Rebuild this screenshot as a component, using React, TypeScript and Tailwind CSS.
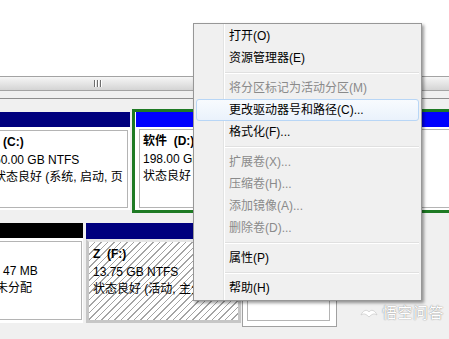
import React from "react";

const FONT = '"Liberation Sans", "Noto Sans CJK SC", sans-serif';

type Item = { label: string; disabled?: boolean; active?: boolean } | "sep";

const items: Item[] = [
  { label: "打开(O)" },
  { label: "资源管理器(E)" },
  "sep",
  { label: "将分区标记为活动分区(M)", disabled: true },
  { label: "更改驱动器号和路径(C)...", active: true },
  { label: "格式化(F)..." },
  "sep",
  { label: "扩展卷(X)...", disabled: true },
  { label: "压缩卷(H)...", disabled: true },
  { label: "添加镜像(A)...", disabled: true },
  { label: "删除卷(D)...", disabled: true },
  "sep",
  { label: "属性(P)" },
  "sep",
  { label: "帮助(H)" },
];

function Menu() {
  return (
    <div className="absolute left-[193px] top-[23px] w-[229px] h-[278px] border border-[#979797] bg-[#f0f0f0] shadow-[2px_2px_3px_rgba(0,0,0,0.4)] py-[1px]">
      <div className="absolute left-[29px] top-0 bottom-0 w-[2px] border-l border-[#e2e3e3] bg-white" />
      <div className="relative flex flex-col">
        {items.map((it, i) =>
          it === "sep" ? (
            <div key={i} className="h-[8px] flex flex-col justify-center pl-[31px] pr-[2px]">
              <div className="h-[1px] bg-[#e0e0e0]" />
              <div className="h-[1px] bg-white" />
            </div>
          ) : (
            <div
              key={i}
              className={
                "h-[22px] flex items-center text-[12px] leading-[22px] whitespace-nowrap " +
                (it.active
                  ? "mx-[2px] pl-[32px] rounded-[3px] border border-[#b8d6f6] bg-gradient-to-b from-[#f8fbfe] to-[#eaf2fc]"
                  : "pl-[35px]") +
                (it.disabled ? " text-[#8a8a8a]" : " text-black")
              }
            >
              {it.label}
            </div>
          )
        )}
      </div>
    </div>
  );
}

function Lines({ lines, pl, firstPl = 0, secondPl = 0 }: { lines: [string, string, string]; pl: number; firstPl?: number; secondPl?: number }) {
  return (
    <div className="text-[12px] leading-[17.5px] text-black whitespace-pre overflow-hidden pt-[3px]" style={{ paddingLeft: pl }}>
      <div className="font-bold h-[17.5px]" style={{ paddingLeft: firstPl }}>{lines[0]}</div>
      <div className="h-[17.5px]" style={{ paddingLeft: secondPl }}>{lines[1]}</div>
      <div className="h-[17.5px]">{lines[2]}</div>
    </div>
  );
}

function Watermark() {
  return (
    <div className="absolute left-[360px] top-[304px] flex items-center gap-[4px]">
      <svg width="18" height="14" viewBox="0 0 18 14">
        <path d="M1 9 C3 4 7 3 9 6 C11 3 15 4 17 9 C14 7 12 8 9 11 C6 8 4 7 1 9 Z" fill="#ffffff" stroke="#c8c8c8" strokeWidth="0.7" />
      </svg>
      <span className="text-[15px] leading-[18px] text-white tracking-[0.5px] [text-shadow:0_0_1px_rgba(0,0,0,0.45),0_0_2px_rgba(0,0,0,0.2)]">悟空问答</span>
    </div>
  );
}

export default function App() {
  return (
    <div className="relative w-[449px] h-[339px] overflow-hidden bg-[#f0f0f0]" style={{ fontFamily: FONT }}>
      <div className="h-[76px] bg-white" />
      {/* splitter */}
      <div className="h-[15px] border-y border-[#a3a3a3] bg-gradient-to-b from-[#f6f6f6] to-[#d4d4d4] flex items-start">
        <div className="ml-[94px] mt-[3px] flex gap-[1px]">
          <div className="w-[2px] h-[7px] bg-[#6e6e6e] border-r border-white" />
          <div className="w-[2px] h-[7px] bg-[#6e6e6e] border-r border-white" />
          <div className="w-[2px] h-[7px] bg-[#6e6e6e] border-r border-white" />
        </div>
      </div>
      <div className="h-[7px] bg-[#f0f0f0]" />
      {/* graphical pane */}
      <div className="border-t border-[#8e8e8e] pt-[10px]">
        {/* row 1 */}
        <div className="flex ml-[-20px] h-[104px]">
          <div className="w-[150px] mt-[3px] h-[98px] flex flex-col shrink-0">
            <div className="h-[15px] bg-[#00007e]" />
            <div className="h-[83px] bg-white pt-[3px] px-[2px] pb-[2px]">
              <div className="h-full border border-[#b4b4b4]">
                <Lines lines={["(C:)", "50.00 GB NTFS", "状态良好 (系统, 启动, 页"]} pl={11} firstPl={9} />
              </div>
            </div>
          </div>
          <div className="ml-[2px] w-[340px] shrink-0 h-[104px] border-[3px] border-r-0 border-[#1e7a24] bg-white pl-[1px] flex flex-col">
            <div className="h-[15px] bg-[#0000ff]" />
            <div className="h-[83px] bg-white pt-[2px] pl-[3px] pb-[2px]">
              <div className="h-full border border-r-0 border-[#b4b4b4]">
                <Lines lines={["软件  (D:)", "198.00 GB NTFS", "状态良好 (逻辑驱动器)"]} pl={3} />
              </div>
            </div>
          </div>
        </div>
        {/* row 2 */}
        <div className="flex ml-[-20px] mt-[7px] h-[107px]">
          <div className="w-[103px] mt-[3px] h-[100px] flex flex-col shrink-0">
            <div className="h-[15px] bg-black" />
            <div className="h-[85px] bg-white pt-[3px] pl-[2px] pr-[1px] pb-[3px]">
              <div className="h-full border border-[#b4b4b4]">
                <Lines lines={["", "47 MB", "未分配"]} pl={13} secondPl={7} />
              </div>
            </div>
          </div>
          <div className="ml-[3px] w-[155px] mt-[3px] h-[100px] flex flex-col shrink-0">
            <div className="h-[16px] bg-[#00007e]" />
            <div className="h-[84px] border-[3px] border-[#c6c6c6] border-t-[#e6e6e6] bg-[repeating-linear-gradient(135deg,#ffffff_0px,#ffffff_3.6px,#a4a4a4_3.6px,#a4a4a4_4.6px)]">
              <div className="text-[12px] leading-[17.5px] text-black whitespace-pre overflow-hidden pl-[4px] pt-[4px]">
                <div className="font-bold h-[17.5px]">Z  (F:)</div>
                <div className="h-[17.5px]">13.75 GB NTFS</div>
                <div className="h-[17.5px]">状态良好 (活动, 主分区)</div>
              </div>
            </div>
          </div>
          <div className="ml-[1px] w-[95px] h-[107px] shrink-0 border border-[#a0a0a0] bg-white pt-[2px] px-[2px] flex flex-col">
            <div className="h-[15px] bg-[#00007e]" />
            <div className="flex-1 pt-[3px] pl-[2px] pr-[4px] pb-[5px]">
              <div className="h-full border border-[#b4b4b4]" />
            </div>
          </div>
        </div>
      </div>
      <Watermark />
      <Menu />
    </div>
  );
}
